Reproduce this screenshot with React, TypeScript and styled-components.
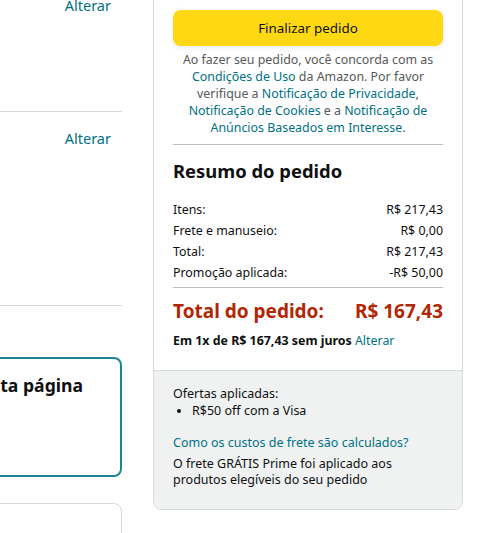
import React from 'react'
import {createGlobalStyle, styled} from 'styled-components'

const GlobalStyle = createGlobalStyle`
  html, body {
    margin: 0;
    padding: 0;
    background: #fff;
    overflow: hidden;
  }
  body {
    font-family: "Noto Sans", "Open Sans", Arial, sans-serif;
    color: #0f1111;
  }
`

const Page = styled.div`
  display: flex;
  align-items: flex-start;
  gap: 31px;
  width: 500px;
  height: 533px;
  overflow: hidden;
`

const LeftClip = styled.div`
  width: 122px;
  flex: none;
  overflow: hidden;
`

const LeftInner = styled.div`
  width: 420px;
  margin-left: -298px;
  margin-top: -12px;
`

const Section = styled.div<{$h: number, $top: number}>`
  height: ${p => p.$h}px;
  border-bottom: 1px solid #d5d9d9;
  display: flex;
  justify-content: flex-end;
  padding: ${p => p.$top}px 11px 0 0;
  box-sizing: border-box;
`

const Link = styled.a`
  color: #007185;
  text-decoration: none;
  cursor: pointer;
`

const SideLink = styled(Link)`
  font-size: 14.5px;
  line-height: 18px;
`

const NoticeBox = styled.div`
  margin-top: 51px;
  height: 120px;
  border: 2px solid #1b8794;
  border-radius: 8px;
  box-sizing: border-box;
  padding: 14px 37px 0 0;
  display: flex;
  justify-content: flex-end;
`

const NoticeTitle = styled.div`
  font-size: 17.6px;
  font-weight: 700;
  line-height: 24px;
`

const NextBox = styled.div`
  margin-top: 26px;
  height: 80px;
  border: 1px solid #d5d9d9;
  border-radius: 8px;
  box-sizing: border-box;
`

const Panel = styled.div`
  width: 310px;
  flex: none;
  margin-top: -21px;
  border: 1px solid #d5d9d9;
  border-radius: 8px;
  overflow: hidden;
  box-sizing: border-box;
`

const PanelBody = styled.div`
  padding: 30px 19px 20px 19px;
`

const PlaceButton = styled.button`
  display: block;
  width: 100%;
  height: 36px;
  border: none;
  border-radius: 8px;
  background: #ffd814;
  box-shadow: 0 2px 5px rgba(213, 217, 217, 0.5);
  font-family: inherit;
  font-size: 13.4px;
  color: #0f1111;
  cursor: pointer;
`

const Legal = styled.p`
  margin: 5px 0 0;
  font-size: 12.4px;
  line-height: 17px;
  text-align: center;
  color: #565959;
  padding-bottom: 8px;
  border-bottom: 1px solid #bbbfbf;
`

const Heading = styled.h3`
  margin: 13px 0 15px;
  font-size: 18.4px;
  font-weight: 700;
  line-height: 26px;
`

const Row = styled.div`
  display: flex;
  justify-content: space-between;
  font-size: 12.4px;
  line-height: 21px;
  color: #0f1111;
`

const Divider = styled.hr`
  border: none;
  border-top: 1px solid #bbbfbf;
  margin: 4px 0 9px;
`

const TotalRow = styled.div`
  display: flex;
  justify-content: space-between;
  font-size: 19px;
  font-weight: 700;
  line-height: 28px;
  color: #b12704;
`

const Installment = styled.div`
  margin-top: 7px;
  font-size: 12.4px;
  line-height: 18px;
  b {
    font-weight: 700;
  }
`

const Offers = styled.div`
  background: #f0f2f2;
  border-top: 1px solid #d5d9d9;
  padding: 14px 19px 21px;
  font-size: 12.5px;
  line-height: 17px;
`

const OfferList = styled.ul`
  margin: 0 0 15px;
  padding-left: 19px;
`

const FreightLink = styled(Link)`
  display: block;
  margin-bottom: 5px;
`

const FreightNote = styled.div`
  max-width: 235px;
  line-height: 16px;
`

const summary = [
    {label: 'Itens:', value: 'R$ 217,43'},
    {label: 'Frete e manuseio:', value: 'R$ 0,00'},
    {label: 'Total:', value: 'R$ 217,43'},
    {label: 'Promoção aplicada:', value: '-R$ 50,00'},
]

export default function App() {
    return <Page>
        <GlobalStyle/>
        <LeftClip>
            <LeftInner>
                <Section $h={124} $top={8}><SideLink>Alterar</SideLink></Section>
                <Section $h={194} $top={17}><SideLink>Alterar</SideLink></Section>
                <NoticeBox><NoticeTitle>Revise seu pedido nesta página</NoticeTitle></NoticeBox>
                <NextBox/>
            </LeftInner>
        </LeftClip>
        <Panel>
            <PanelBody>
                <PlaceButton>Finalizar pedido</PlaceButton>
                <Legal>
                    Ao fazer seu pedido, você concorda com as <Link>Condições de Uso</Link> da Amazon. Por favor
                    verifique a <Link>Notificação de Privacidade</Link>, <Link>Notificação de Cookies</Link> e
                    a <Link>Notificação de Anúncios Baseados em Interesse</Link>.
                </Legal>
                <Heading>Resumo do pedido</Heading>
                {summary.map(r =>
                    <Row key={r.label}><span>{r.label}</span><span>{r.value}</span></Row>
                )}
                <Divider/>
                <TotalRow><span>Total do pedido:</span><span>R$ 167,43</span></TotalRow>
                <Installment><b>Em 1x de R$ 167,43 sem juros</b> <Link>Alterar</Link></Installment>
            </PanelBody>
            <Offers>
                <div>Ofertas aplicadas:</div>
                <OfferList><li>R$50 off com a Visa</li></OfferList>
                <FreightLink>Como os custos de frete são calculados?</FreightLink>
                <FreightNote>O frete GRÁTIS Prime foi aplicado aos produtos elegíveis do seu pedido</FreightNote>
            </Offers>
        </Panel>
    </Page>
}
